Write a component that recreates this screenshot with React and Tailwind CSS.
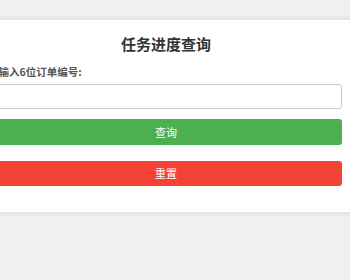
import React, { useState } from 'react';

const App = () => {
  const [orderId, setOrderId] = useState('');

  return (
    <div
      className="w-[350px] h-[280px] overflow-hidden bg-[#f0f0f0] pt-[20px]"
      style={{ fontFamily: '"Noto Sans CJK SC", "Noto Sans", sans-serif' }}
    >
      <div className="ml-[-30px] w-[392px] bg-white shadow-[0_0_8px_rgba(0,0,0,0.1)] px-[20px] pt-[14px] pb-[26px]">
        <h2 className="text-center text-[15px] leading-[20px] font-bold text-[#333]">任务进度查询</h2>
        <label className="block mt-[11px] text-[10.5px] leading-[14px] font-bold text-[#555] ml-[-2px]">
          请输入6位订单编号:
        </label>
        <input
          type="text"
          value={orderId}
          onChange={(e) => setOrderId(e.target.value)}
          className="block mt-[5px] w-full h-[25px] border border-[#ccc] rounded-[3px] px-2 text-[11px] outline-none"
        />
        <button className="block mt-[10px] w-full h-[26px] bg-[#4caf50] text-white text-[11px] rounded-[3px]">
          查询
        </button>
        <button className="block mt-[16px] w-full h-[25px] bg-[#f44336] text-white text-[11px] rounded-[3px]">
          重置
        </button>
      </div>
    </div>
  );
};

export default App;
